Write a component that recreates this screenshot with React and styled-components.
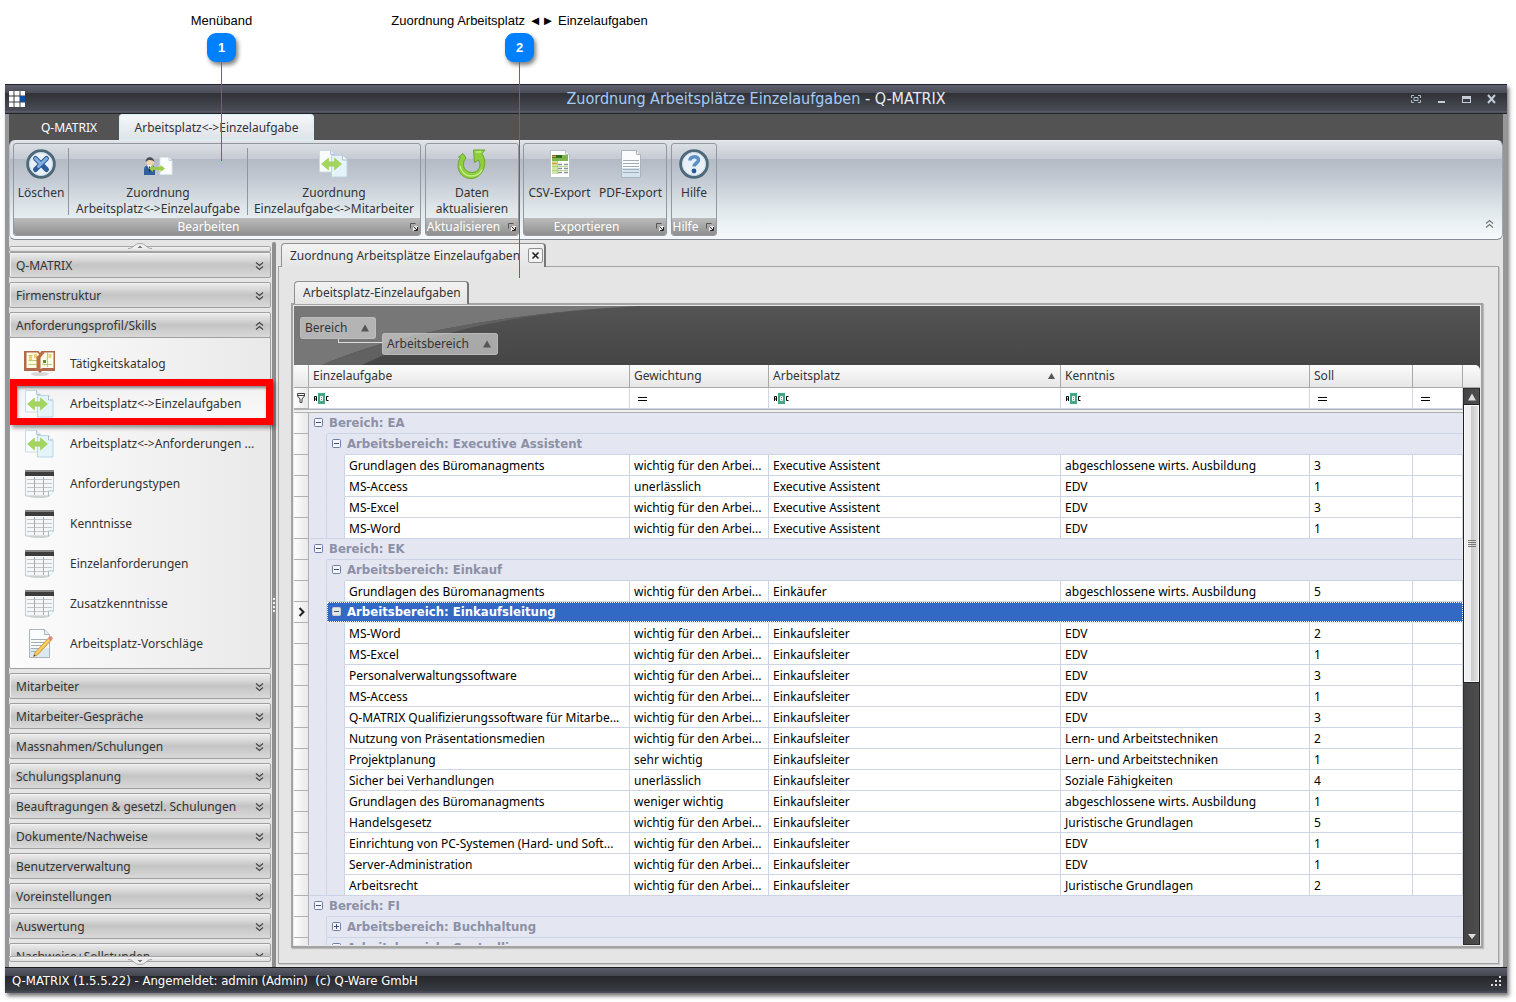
import React from 'react';
import styled, { createGlobalStyle, css } from 'styled-components';

const condensed = '"DejaVu Sans Condensed", "Noto Sans", sans-serif';

const GlobalStyle = createGlobalStyle`
  * { box-sizing: border-box; }
  body {
    margin: 0;
    background: #fff;
    color: #333;
    font-family: "Noto Sans", "DejaVu Sans Condensed", sans-serif;
    font-size: 12px;
    line-height: 16px;
  }
  button, input {
    font: inherit;
    color: inherit;
    border: 0;
    padding: 0;
    background: none;
  }
  a { color: inherit; text-decoration: none; }
`;

const Page = styled.div`
  position: relative;
  display: flex;
  flex-direction: column;
  height: 100vh;
  padding: 84px 9px 9px 5px;
  overflow: hidden;
`;

// Callouts
const Callout = styled.div`
  position: absolute;
  z-index: 5;
  top: 13px;
  left: ${(p) => p.$left}px;
  width: 301px;
  display: flex;
  flex-direction: column;
  align-items: center;
  font-family: "Liberation Sans", sans-serif;
  font-size: 13px;
  color: #000;
  white-space: pre;
  pointer-events: none;
`;

const CalloutBadge = styled.span`
  width: 29px;
  height: 29px;
  margin-top: 4px;
  border-radius: 9px;
  background: #0080ff;
  box-shadow: 2px 3px 4px rgba(0, 0, 0, 0.5);
  color: #fff;
  font-weight: bold;
  line-height: 29px;
  text-align: center;
`;

const CalloutLine = styled.span`
  width: 1px;
  height: ${(p) => p.$length}px;
  background: #0080ff;
`;

// Window
const Window = styled.div`
  flex: 1;
  min-height: 0;
  display: flex;
  flex-direction: column;
  box-shadow: 2px 3px 4px rgba(0, 0, 0, 0.55);
  background: #e5e5e5;
`;

const TitleBar = styled.header`
  display: flex;
  align-items: center;
  height: 30px;
  padding: 0 8px 0 4px;
  border-top: 1px solid #22242b;
  border-bottom: 1px solid #22242b;
  background: linear-gradient(#5d606c 0, #4b4e59 8px, #303136 8px, #4a4d57 26px, #666a77 27px, #3a3c45 28px);
`;

const Title = styled.h1`
  flex: 1;
  margin: 0;
  padding-left: 79px;
  font-family: ${condensed};
  font-size: 16px;
  font-weight: normal;
  text-align: center;
  color: #e6ebf2;
`;

const TitleDocument = styled.span`
  color: #a5ccf7;
`;

const WindowButtons = styled.div`
  display: flex;
  gap: 9px;
`;

const WindowButton = styled.button`
  width: 16px;
  height: 16px;
  svg { display: block; }
`;

const Frame = styled.div`
  flex: 1;
  min-height: 0;
  display: flex;
  flex-direction: column;
  border: solid #96979a;
  border-width: 0 4px;
`;

const RibbonTabs = styled.nav`
  display: flex;
  height: 26px;
  padding-left: 10px;
  background: #535353;
`;

const RibbonTab = styled.button`
  height: 26px;
  padding-top: 2px;
  border-radius: 4px 4px 0 0;
  width: ${(p) => p.$width}px;
  color: #fff;
  ${(p) => p.$active && css`
    color: #333;
    background: linear-gradient(#f7f9fa, #dde2e8);
    box-shadow: inset 0 0 2px 1px #d5f0f5;
  `}
`;

const RibbonBack = styled.div`
  background: linear-gradient(#535353 90px, #e5e5e5 90px);
`;

const Ribbon = styled.div`
  display: flex;
  align-items: flex-start;
  gap: 4px;
  height: 100px;
  padding: 2px 7px 0 3px;
  border: 1px solid #9fa5b0;
  border-color: #e7eaee #9fa5b0 #858a96 #b8bdc6;
  border-radius: 6px;
  background: linear-gradient(#dfe3e8 0, #c5cad3 18px, #b3bac5 18px, #c2c9d2 38px, #dfe7eb 68px, #f6fafc 98px);
`;

const RibbonGroup = styled.section`
  display: flex;
  flex-direction: column;
  width: ${(p) => p.$width}px;
  height: 93px;
  border: 1px solid #93979e;
  border-radius: 3px;
  overflow: hidden;
`;

const RibbonItems = styled.div`
  flex: 1;
  display: flex;
`;

const RibbonButton = styled.button`
  flex: ${(p) => p.$grow || 1} 1 0;
  display: flex;
  flex-direction: column;
  align-items: center;
  padding-top: 4px;
  white-space: pre;
  svg { margin-bottom: 5px; flex: none; }
`;

const RibbonDivider = styled.span`
  width: 1px;
  height: 67px;
  margin-top: 4px;
  background: #91959d;
`;

const RibbonCaption = styled.footer`
  display: flex;
  align-items: center;
  gap: 7px;
  height: 17px;
  padding-right: 2px;
  background: linear-gradient(#bcbcbc, #8f8f8f);
  color: #fff;
  span { flex: 1; text-align: center; }
  svg { display: block; flex: none; }
`;

const RibbonCollapse = styled.button`
  margin: 75px 0 0 auto;
  width: 12px;
  height: 16px;
`;

const Body = styled.div`
  flex: 1;
  min-height: 0;
  display: flex;
`;

// Sidebar
const Sidebar = styled.aside`
  flex: none;
  display: flex;
  flex-direction: column;
  width: 262px;
  padding: 6px 0 5px;
`;

const ScrollBarStrip = styled.button`
  position: relative;
  flex: none;
  height: 6px;
  border: 1px solid #a6a6a6;
  border-radius: 2px;
  background: linear-gradient(#f3f3f3, #dcdcdc);
  svg {
    position: absolute;
    left: 118px;
    ${(p) => (p.$up ? 'bottom: 2px;' : 'top: 2px;')}
  }
`;

const SidebarList = styled.div`
  position: relative;
  z-index: 2;
  flex: 1;
  min-height: 0;
  display: flex;
  flex-direction: column;
  gap: 4px;
  overflow-x: visible;
  overflow-y: clip;
`;

const SidebarHeader = styled.button`
  flex: none;
  display: flex;
  align-items: center;
  justify-content: space-between;
  width: 100%;
  height: 26px;
  padding: 1px 5px 0 6px;
  border: 1px solid #a0a0a0;
  border-radius: 2px;
  background: linear-gradient(#ededed 0, #d6d6d6 7px, #c4c4c4 12px, #d9d9d9 24px);
  box-shadow: inset 1px 1px 0 #f2f2f2;
`;

const SidebarPanel = styled.div`
  flex: none;
  margin-top: -5px;
  padding: 5px 0;
  border: 1px solid #a0a0a0;
  border-radius: 0 0 2px 2px;
  background: linear-gradient(90deg, #fcfcfc, #e9e9e9);
`;

const SidebarItem = styled.a`
  position: relative;
  display: flex;
  align-items: center;
  gap: 14px;
  height: 40px;
  padding: 2px 0 0 14px;
  white-space: nowrap;
  svg { flex: none; }
  ${(p) => p.$active && css`
    background: linear-gradient(#d4d4d4, #f3f3f3 8px, #fafafa);
  `}
`;

const RedMarker = styled.span`
  position: absolute;
  top: -4px;
  left: 0;
  right: -3px;
  height: 46px;
  border: 7px solid #fe0000;
  box-shadow: 2px 3px 4px rgba(0, 0, 0, 0.4), inset 1px 2px 3px rgba(0, 0, 0, 0.4);
`;

const Splitter = styled.div`
  flex: none;
  display: flex;
  flex-direction: column;
  align-items: center;
  justify-content: center;
  gap: 2px;
  width: 4px;
  margin: 2px 0 0 1px;
  background: #8d8d8d;
  border-radius: 2px 2px 0 0;
  i { width: 2px; height: 2px; background: #eee; }
`;

// Content
const Content = styled.main`
  flex: 1;
  min-width: 0;
  display: flex;
  flex-direction: column;
  padding: 3px 4px 3px 2px;
`;

const TabStrip = styled.div`
  position: relative;
  z-index: 1;
  flex: none;
  display: flex;
  height: ${(p) => p.$height}px;
  margin: 0 0 -1px 3px;
`;

const DocTab = styled.div`
  display: flex;
  align-items: center;
  justify-content: space-between;
  gap: 8px;
  padding: 0 1px 0 8px;
  width: ${(p) => p.$width}px;
  border: 1px solid #909090;
  border-bottom: 0;
  border-right: 2px solid #777;
  border-radius: 4px 4px 0 0;
  background: linear-gradient(#f2f2f2, #e5e5e5);
  white-space: nowrap;
`;

const CloseTab = styled.button`
  width: 15px;
  height: 15px;
  border: 1px solid #909090;
  border-radius: 2px;
  background: #f2f2f2;
  svg { display: block; }
`;

const DocPanel = styled.div`
  flex: 1;
  min-height: 0;
  display: flex;
  flex-direction: column;
  padding: 14px 15px 15px 12px;
  border: 1px solid #a3a3a3;
  box-shadow: 1px 1px 0 #c8c8c8;
`;

const GridPanel = styled.div`
  flex: 1;
  min-height: 0;
  display: flex;
  flex-direction: column;
  border: 2px solid #a3a3a3;
  padding: 1px;
  background: #e8e8e8;
  box-shadow: 1px 1px 1px #bbb;
`;

const GroupBar = styled.div`
  position: relative;
  flex: none;
  display: flex;
  align-items: flex-start;
  height: 59px;
  padding: 11px 6px;
  background: linear-gradient(#545454, #454545);
`;

const GroupBarArt = styled.svg`
  position: absolute;
  left: 0;
  top: 0;
`;

const GroupChip = styled.button`
  position: relative;
  display: flex;
  align-items: center;
  justify-content: space-between;
  width: ${(p) => p.$width}px;
  height: 22px;
  margin-top: ${(p) => p.$drop || 0}px;
  padding: 0 6px 0 4px;
  border-radius: 3px;
  border: 1px solid rgba(200, 200, 200, 0.5);
  background: rgba(200, 200, 200, 0.75);
`;

const GroupLink = styled.span`
  position: relative;
  width: 44px;
  height: 4px;
  margin: 22px 0 0 -38px;
  border: solid #ddd;
  border-width: 0 0 1px 1px;
`;

const GridArea = styled.div`
  flex: 1;
  min-height: 0;
  display: flex;
  background: #e4e7f1;
`;

const TableClip = styled.div`
  flex: 1;
  min-width: 0;
  overflow: hidden;
`;

const Table = styled.table`
  width: 100%;
  table-layout: fixed;
  border-collapse: separate;
  border-spacing: 0;
  color: #000;
`;

const HeadCell = styled.th`
  height: 23px;
  padding: 0 5px 0 4px;
  border-right: 1px solid #a9a9a9;
  border-bottom: 1px solid #a9a9a9;
  background: linear-gradient(#fcfcfc, #e6e6e6);
  color: #333;
  font-weight: normal;
  text-align: left;
`;

const HeadLabel = styled.span`
  display: flex;
  align-items: center;
  justify-content: space-between;
`;

const FilterCell = styled.td`
  height: 21px;
  padding: 0 4px;
  border-right: 1px solid #d0d7e8;
  border-bottom: 1px solid #d0d7e8;
  background: #fff;
`;

const FilterBox = styled.label`
  display: flex;
  align-items: center;
  input { flex: 1; min-width: 0; width: 0; height: 16px; outline: 0; }
`;

const Indicator = styled.td`
  height: 21px;
  padding: 0;
  border-right: 1px solid #b0b0b0;
  border-bottom: 1px solid #b0b0b0;
  background: linear-gradient(90deg, #fdfdfd, #e9e9e9);
  text-align: center;
  svg { display: block; margin: 0 auto; }
`;

const GapCell = styled.td`
  height: 4px;
  padding: 0;
  border: solid #b0b0b0;
  border-width: 1px 0;
  background: #f0f0f0;
`;

const Cell = styled.td`
  height: 21px;
  padding: 2px 2px 0 4px;
  border-right: 1px solid #ccd4e6;
  border-bottom: 1px solid #ccd4e6;
  background: #fff;
  white-space: nowrap;
  overflow: hidden;
`;

const Indent = styled.td`
  padding: 0;
  border-right: 1px solid #ccd4e6;
  border-bottom: 1px solid ${(p) => (p.$end ? '#ccd4e6' : '#e4e7f1')};
  background: #e4e7f1;
`;

const GroupCell = styled.td`
  height: 21px;
  padding: 0;
  background: #e4e7f1;
`;

const GroupRow = styled.div`
  display: flex;
  height: 21px;
  color: #8c90a6;
  font-family: ${condensed};
  font-size: 13px;
  font-weight: bold;
  ${(p) => p.$selected && css`
    height: 20px;
    margin-bottom: 1px;
    background: #316ac5;
    color: #fff;
    outline: 1px dotted #fff;
    outline-offset: -1px;
  `}
`;

const Toggle = styled.button`
  width: 18px;
  height: 21px;
  padding: 0 0 2px 5px;
  border-bottom: 1px solid ${(p) => (p.$line ? '#ccd4e6' : 'transparent')};
  svg { display: block; }
`;

const GroupLabel = styled.span`
  flex: 1;
  height: 21px;
  padding: 2px 0 0 2px;
  border-bottom: 1px solid ${(p) => (p.$selected ? 'transparent' : '#ccd4e6')};
`;

const ScrollColumn = styled.div`
  flex: none;
  display: flex;
  flex-direction: column;
  width: 17px;
  background: #454545;
`;

const ScrollCorner = styled.div`
  height: 23px;
  border-bottom: 1px solid #a9a9a9;
  border-radius: 0 5px 0 0;
  background: linear-gradient(#fcfcfc, #e6e6e6);
`;

const ScrollTrack = styled.div`
  flex: 1;
  display: flex;
  flex-direction: column;
  border: 1px solid #303030;
  border-right-color: #222;
  background: linear-gradient(90deg, #444, #4e4e4e);
`;

const ScrollButton = styled.button`
  height: 16px;
  svg { display: block; margin: 0 auto; }
`;

const ScrollRoom = styled.div`
  flex: 1;
  min-height: 0;
`;

const ScrollThumb = styled.div`
  display: flex;
  flex-direction: column;
  align-items: center;
  justify-content: center;
  gap: 1px;
  height: 53%;
  border: 1px solid #fafafa;
  outline: 1px solid #222;
  background: linear-gradient(90deg, #efefef 45%, #c9c9cf 50%, #e2e2e2);
  i { width: 8px; height: 1px; background: #777; }
`;

const StatusBar = styled.footer`
  flex: none;
  display: flex;
  align-items: center;
  justify-content: space-between;
  height: 26px;
  padding: 0 5px 0 7px;
  border-top: 1px solid #1b1c20;
  background: linear-gradient(#5b5e6a 0, #42454e 8px, #26272b 8px, #383a42 22px, #50535f);
  color: #fff;
  font-family: ${condensed};
  font-size: 13px;
  white-space: pre;
`;

// Icons
const Chevrons = ({ up, color = '#444' }) => (
  <svg width="11" height="12" viewBox="0 0 11 12" fill="none" stroke={color} strokeWidth="1.2">
    {up ? <path d="M2 5.500 5.500 2.500 9 5.500M2 9.500l3.500-3 3.500 3" /> : <path d="M2 2.500l3.500 3 3.500-3M2 6.500l3.500 3 3.500-3" />}
  </svg>
);

const Triangle = ({ size = 8, down, color = '#555' }) => (
  <svg width={size} height="8" viewBox="0 0 8 8"><path d={down ? 'M0 2h8L4 7z' : 'M0 7.500h8L4 .500z'} fill={color} /></svg>
);

const LogoIcon = () => (
  <svg width="16" height="16" viewBox="0 0 16 16">
    <path fill="#fff" d="M0 0h4.500v4.500H0zM5.500 0h5v4.500h-5zM11.500 0H16v4.500h-4.500zM0 5.500h4.500v5H0zM5.500 5.500h5v5h-5zM0 11.500h4.500V16H0zM5.500 11.500h5V16h-5zM11.500 11.500H16V16h-4.500z" />
    <path fill="#0b4ea2" d="M11 5h5v5.500h-5z" />
  </svg>
);

const DeleteIcon = () => (
  <svg width="32" height="32" viewBox="0 0 32 32">
    <circle cx="16" cy="16" r="13.300" fill="#e9f0f7" stroke="#4d6878" strokeWidth="3" />
    <circle cx="16" cy="16" r="11.500" fill="none" stroke="#c8d8e6" />
    <path d="m10.500 10.500 11 11M21.500 10.500l-11 11" stroke="#2c5d9b" strokeWidth="5" strokeLinecap="round" />
    <path d="m10.500 10.500 4.500 4.500M21.500 10.500l-8 8" stroke="#84b0e0" strokeWidth="3" strokeLinecap="round" />
  </svg>
);

const HelpIcon = () => (
  <svg width="32" height="32" viewBox="0 0 32 32">
    <circle cx="16" cy="16" r="13.300" fill="#e9f0f7" stroke="#4d6878" strokeWidth="3" />
    <circle cx="16" cy="16" r="11.500" fill="none" stroke="#c8d8e6" />
    <path d="M12 12.500c0-5 8.500-5 8.500-.500 0 3-4.500 3.500-4.500 6.500" fill="none" stroke="#5a8fc8" strokeWidth="3.600" />
    <circle cx="16" cy="23" r="2.400" fill="#245a9c" />
  </svg>
);

const PersonDocIcon = () => (
  <svg width="32" height="32" viewBox="0 0 32 32">
    <path d="M18 9.500h9l3 3v14H18z" fill="#fafcfd" stroke="#dbe5ec" />
    <path d="M27 9.500v3h3" fill="none" stroke="#c4d2dc" />
    <path d="M2 27v-5.500c0-3 2-4.500 5-4.500s6 1 6 4.500V27z" fill="#2f5f9e" />
    <path d="m5 17 2.500 5 2.500-5z" fill="#fff" />
    <path d="M7.500 18.500v5" stroke="#222" strokeWidth="1.200" />
    <circle cx="8" cy="13.500" r="3.900" fill="#f0d3b4" />
    <path d="M3.800 14c-1-6.500 9-6.500 8.400 0-1-2.500-6.500-3-8.400 0" fill="#4a4f55" />
    <path d="m7 20.500 4-3.500v2h7.500v-2l4.500 3.500-4.500 3.500v-2H11v2z" fill="#9acb4a" />
  </svg>
);

const SwapDocsIcon = () => (
  <svg width="32" height="32" viewBox="1 1 32 32">
    <path d="M2.500 3.500h11l4 4V25h-15z" fill="#f8fcfe" stroke="#cbdbe4" />
    <path d="M13.500 3.500v4h4" fill="#e3eef5" stroke="#b5c6d0" />
    <path d="M14.500 8.500h11l4.500 4.500v17H14.500z" fill="#e4f4fa" stroke="#bcd5e2" />
    <path d="M25.500 8.500V13H30" fill="#fff" stroke="#a9bbc7" />
    <path d="m4.500 17 7-6v3.800h6V11l7 6-7 6v-3.800h-6V23z" fill="#a4d55f" stroke="#98c953" strokeWidth=".6" />
  </svg>
);

const RefreshIcon = () => (
  <svg width="32" height="32" viewBox="0 0 32 32">
    <path d="M2.500 9 7 5.500l3 4.500c-5 5-2.500 14.500 6 14.500 7 0 10-7 6.500-12.500l-4 2.500L17.500 2H29l-3 3.500c7 11-.5 25.500-11.500 25C3 30-1 18 4.500 9.500z" fill="#8fce3f" stroke="#6ba72c" />
    <path d="M4 18c1 6 5.500 10 11 10s9.500-3 11-6.500M19.500 4h6" fill="none" stroke="#c4ec8b" strokeWidth="1.500" />
  </svg>
);

const CsvIcon = () => (
  <svg width="32" height="32" viewBox="0 0 32 32">
    <path d="M6.500 2.500h15l4 4v23h-19z" fill="#fff" stroke="#b9c2ca" />
    <path d="M21.500 2.500v4h4" fill="#eee" stroke="#b9c2ca" />
    <path d="M8 7h16v6H8z" fill="#7fb44f" />
    <path d="M8 7h10v3H8z" fill="#2f6b1c" />
    <path d="M8 13h5v13H8z" fill="#cfe6a8" />
    <path d="M8 8.500h4M8 15.500h5" stroke="#e0a03a" strokeWidth="1.500" />
    <path d="M14 16.500h4M20 16.500h4M14 20.500h4M20 20.500h4M14 24.500h4M20 24.500h4" stroke="#8a9199" strokeWidth="1.500" />
    <path d="M8 18.500h16M8 22.500h16M13.500 13v13" stroke="#a7cd79" strokeWidth=".8" />
  </svg>
);

const PdfIcon = () => (
  <svg width="32" height="32" viewBox="0 0 32 32">
    <path d="M6.500 2.500h15l4 4v23h-19z" fill="#fafcfd" stroke="#aab4bd" />
    <path d="M7 20h18v9H7z" fill="#d3e4ee" />
    <path d="M21.500 2.500v4h4" fill="#eee" stroke="#aab4bd" />
    <path d="M8 12.500h16M8 15.500h16M8 18.500h16M8 21.500h16M8 24.500h16" stroke="#a3adb6" />
  </svg>
);

const EditDocIcon = () => (
  <svg width="32" height="32" viewBox="0 0 32 32">
    <path d="M5.500 1.500h15l5 5v23h-20z" fill="#fbfcfd" stroke="#aab4bd" />
    <path d="M6 20h19v9H6z" fill="#dce9f1" />
    <path d="M20.500 1.500v5h5" fill="#eee" stroke="#aab4bd" />
    <path d="M7 11.500h16M7 14.500h16M7 17.500h13M7 20.500h10M7 23.500h8" stroke="#a3b0ba" />
    <path d="m9.500 28.500 1.500-4L25 9.500l2.500 2.500L13.500 27z" fill="#f5c04c" stroke="#c98b2c" strokeWidth=".7" />
    <path d="M12 25.500 26 11" stroke="#fbe08c" />
    <path d="m24 10.500 2-2c1-1 3.500 1.500 2.500 2.500l-2 2z" fill="#e0857e" />
    <path d="m9.500 28.500.8-2 1.200 1.200z" fill="#333" />
  </svg>
);

const TableIcon = () => (
  <svg width="32" height="32" viewBox="0 0 32 32">
    <ellipse cx="15" cy="28" rx="11" ry="2" fill="#d2d2d2" />
    <path d="M1.500 2.500h28V23l-5 5h-23z" fill="#f4f6f7" stroke="#c2cbd1" />
    <path d="M1 2h29v6H1z" fill="#3c3c3c" />
    <path d="M1 2h29v2H1z" fill="#858585" />
    <path d="M3 11.500h25M3 15.500h25M3 19.500h25M3 23.500h22" stroke="#c3c7ca" />
    <path d="M10.500 9v18M19.500 9v18" stroke="#aaaeb1" />
    <path d="M24.500 28v-5h5" fill="#fff" stroke="#a9bcc8" />
  </svg>
);

const BookIcon = () => (
  <svg width="32" height="32" viewBox="0 0 32 32">
    <ellipse cx="16" cy="26" rx="9" ry="2" fill="#d8d8d8" />
    <path d="M0 3h14.500L16 5l1.500-2H31v20H18l-2 2-2-2H0z" fill="#b0674a" />
    <path d="M2.500 4.500h11L15 6v15l-1.500-1h-11z" fill="#fff9df" />
    <path d="M29.500 4.500h-11L16.500 6v15l2-1h11z" fill="#fffbe9" />
    <path d="M4.500 7.500h4M4.500 12.500h9M18 16.500h10M23.500 5v14M4.500 16.500h8" stroke="#b4cf79" />
    <path d="M5 8h3v4H5zM10 6h3v4h-3zM24.500 6h3v4h-3z" fill="#ecd178" />
    <path d="M19 12h3v3h-3z" fill="#5d8f35" />
    <path d="M12.500 23V9l7-6 1 2-4.500 5v12z" fill="#bd6b48" />
  </svg>
);

const FilterTextIcon = () => (
  <svg width="16" height="12" viewBox="0 0 16 12" fill="none">
    <path d="M5 1h7v11H5z" fill="#43a883" />
    <path d="M1.500 9V4.500h2V9M1.500 7h2M15.500 4.500h-2v4h2" stroke="#000" />
    <path d="M7.500 4.500h2v4h-2zM7.500 6.500h2" stroke="#fff" />
  </svg>
);

const EqualsIcon = () => (
  <svg width="16" height="12" viewBox="0 0 16 12"><path d="M4 5.500h9M4 8.500h9" stroke="#000" /></svg>
);

const FunnelIcon = () => (
  <svg width="10" height="10" viewBox="0 0 10 10" fill="none" stroke="#444">
    <path d="M1.500.500h7v2.500L6 6v3.500H4V6L1.500 3zM1.500 2.500h7" />
  </svg>
);

const PlusMinus = ({ plus, selected }) => (
  <svg width="9" height="9" viewBox="0 0 9 9">
    <rect x=".5" y=".5" width="8" height="8" rx="1" fill={selected ? '#e6e6e0' : '#f4f6fb'} stroke={selected ? '#c9cdd6' : '#6c7ea2'} />
    <path d={plus ? 'M2 4.500h5M4.500 2v5' : 'M2 4.500h5'} stroke="#3c4f78" />
  </svg>
);

const LauncherIcon = () => (
  <svg width="8" height="8" viewBox="0 0 8 8" fill="none">
    <path d="M.5 5.500v-5h5" stroke="#555" />
    <path d="M3 3h5v5H3z" fill="#e8e8e8" />
    <path d="M3.500 3.500 7 7M7.500 4v3.500H4" stroke="#222" />
  </svg>
);

const StripNub = ({ up }) => (
  <svg width="24" height="6" viewBox="0 0 24 6">
    <path d={up ? 'M0 5.500C6 5.500 6 .5 12 .5s6 5 12 5' : 'M0 .5c6 0 6 5 12 5s6-5 12-5'} fill="#f0f0f0" stroke="#a6a6a6" />
    <path d={up ? 'M9.500 5h5L12 2.500z' : 'M9.500 1h5L12 3.500z'} fill="#777" />
  </svg>
);

// Data
const sectionsTop = ['Q-MATRIX', 'Firmenstruktur'];

const skills = [
  { label: 'Tätigkeitskatalog', Icon: BookIcon },
  { label: 'Arbeitsplatz<->Einzelaufgaben', Icon: SwapDocsIcon, active: true },
  { label: 'Arbeitsplatz<->Anforderungen ...', Icon: SwapDocsIcon },
  { label: 'Anforderungstypen', Icon: TableIcon },
  { label: 'Kenntnisse', Icon: TableIcon },
  { label: 'Einzelanforderungen', Icon: TableIcon },
  { label: 'Zusatzkenntnisse', Icon: TableIcon },
  { label: 'Arbeitsplatz-Vorschläge', Icon: EditDocIcon },
];

const sectionsBottom = [
  'Mitarbeiter',
  'Mitarbeiter-Gespräche',
  'Massnahmen/Schulungen',
  'Schulungsplanung',
  'Beauftragungen & gesetzl. Schulungen',
  'Dokumente/Nachweise',
  'Benutzerverwaltung',
  'Voreinstellungen',
  'Auswertung',
  'Nachweise+Sollstunden',
];

const W = 'wichtig für den Arbei...';
const EA = 'Executive Assistent';
const EL = 'Einkaufsleiter';

const rows = [
  { area: 'Bereich: EA' },
  { group: 'Arbeitsbereich: Executive Assistent' },
  { cells: ['Grundlagen des Büromanagments', W, EA, 'abgeschlossene wirts. Ausbildung', 3] },
  { cells: ['MS-Access', 'unerlässlich', EA, 'EDV', 1] },
  { cells: ['MS-Excel', W, EA, 'EDV', 3] },
  { cells: ['MS-Word', W, EA, 'EDV', 1] },
  { area: 'Bereich: EK' },
  { group: 'Arbeitsbereich: Einkauf' },
  { cells: ['Grundlagen des Büromanagments', W, 'Einkäufer', 'abgeschlossene wirts. Ausbildung', 5] },
  { group: 'Arbeitsbereich: Einkaufsleitung', selected: true },
  { cells: ['MS-Word', W, EL, 'EDV', 2] },
  { cells: ['MS-Excel', W, EL, 'EDV', 1] },
  { cells: ['Personalverwaltungssoftware', W, EL, 'EDV', 3] },
  { cells: ['MS-Access', W, EL, 'EDV', 1] },
  { cells: ['Q-MATRIX Qualifizierungssoftware für Mitarbe...', W, EL, 'EDV', 3] },
  { cells: ['Nutzung von Präsentationsmedien', W, EL, 'Lern- und Arbeitstechniken', 2] },
  { cells: ['Projektplanung', 'sehr wichtig', EL, 'Lern- und Arbeitstechniken', 1] },
  { cells: ['Sicher bei Verhandlungen', 'unerlässlich', EL, 'Soziale Fähigkeiten', 4] },
  { cells: ['Grundlagen des Büromanagments', 'weniger wichtig', EL, 'abgeschlossene wirts. Ausbildung', 1] },
  { cells: ['Handelsgesetz', W, EL, 'Juristische Grundlagen', 5] },
  { cells: ['Einrichtung von PC-Systemen (Hard- und Soft...', W, EL, 'EDV', 1] },
  { cells: ['Server-Administration', W, EL, 'EDV', 1] },
  { cells: ['Arbeitsrecht', W, EL, 'Juristische Grundlagen', 2] },
  { area: 'Bereich: FI' },
  { group: 'Arbeitsbereich: Buchhaltung', collapsed: true },
  { group: 'Arbeitsbereich: Controlling', collapsed: true },
];

const columns = ['Gewichtung', 'Arbeitsplatz', 'Kenntnis', 'Soll', ''];

function GridRow({ row, next = {} }) {
  if (row.area) {
    return (
      <tr>
        <Indicator />
        <GroupCell colSpan={8}>
          <GroupRow>
            <Toggle aria-label="Gruppe umschalten"><PlusMinus /></Toggle>
            <GroupLabel>{row.area}</GroupLabel>
          </GroupRow>
        </GroupCell>
      </tr>
    );
  }
  if (row.group) {
    return (
      <tr>
        <Indicator>
          {row.selected && (
            <svg width="8" height="10" viewBox="0 0 8 10"><path d="m2.500 1 4 4-4 4" fill="none" stroke="#222" strokeWidth="2" /></svg>
          )}
        </Indicator>
        <Indent />
        <GroupCell colSpan={7}>
          <GroupRow $selected={row.selected}>
            <Toggle $line={row.collapsed} aria-label="Gruppe umschalten">
              <PlusMinus plus={row.collapsed} selected={row.selected} />
            </Toggle>
            <GroupLabel $selected={row.selected}>{row.group}</GroupLabel>
          </GroupRow>
        </GroupCell>
      </tr>
    );
  }
  return (
    <tr>
      <Indicator />
      <Indent $end={!!next.area} />
      <Indent $end={!next.cells} />
      {row.cells.map((text, i) => <Cell key={i}>{text}</Cell>)}
      <Cell />
    </tr>
  );
}

function Filter({ name, equals }) {
  return (
    <FilterBox>
      {equals ? <EqualsIcon /> : <FilterTextIcon />}
      <input type="text" aria-label={`Filter ${name}`} />
    </FilterBox>
  );
}

function Grid() {
  return (
    <GridArea>
      <TableClip>
        <Table>
          <colgroup>
            <col style={{ width: 15 }} />
            <col style={{ width: 18 }} />
            <col style={{ width: 18 }} />
            <col style={{ width: 285 }} />
            <col style={{ width: 139 }} />
            <col style={{ width: 292 }} />
            <col style={{ width: 249 }} />
            <col style={{ width: 103 }} />
            <col />
          </colgroup>
          <thead>
            <tr>
              <HeadCell />
              <HeadCell colSpan={3}>Einzelaufgabe</HeadCell>
              {columns.map((name) => (
                <HeadCell key={name}>
                  <HeadLabel>{name}{name === 'Arbeitsplatz' && <Triangle size={7} />}</HeadLabel>
                </HeadCell>
              ))}
            </tr>
          </thead>
          <tbody>
            <tr>
              <Indicator><FunnelIcon /></Indicator>
              <FilterCell colSpan={3}><Filter name="Einzelaufgabe" /></FilterCell>
              {columns.map((name) => (
                <FilterCell key={name}>
                  <Filter name={name} equals={name !== 'Arbeitsplatz' && name !== 'Kenntnis'} />
                </FilterCell>
              ))}
            </tr>
            <tr><GapCell colSpan={9} /></tr>
            {rows.map((row, i) => <GridRow key={i} row={row} next={rows[i + 1]} />)}
          </tbody>
        </Table>
      </TableClip>
      <ScrollColumn>
        <ScrollCorner />
        <ScrollTrack>
          <ScrollButton aria-label="Nach oben"><Triangle color="#ddd" /></ScrollButton>
          <ScrollRoom>
            <ScrollThumb><i /><i /><i /><i /></ScrollThumb>
          </ScrollRoom>
          <ScrollButton aria-label="Nach unten"><Triangle down color="#ddd" /></ScrollButton>
        </ScrollTrack>
      </ScrollColumn>
    </GridArea>
  );
}

function Caption({ children }) {
  return <RibbonCaption><span>{children}</span><LauncherIcon /></RibbonCaption>;
}

function Menu() {
  return (
    <RibbonBack>
      <Ribbon>
        <RibbonGroup $width={408}>
          <RibbonItems>
            <RibbonButton $grow={54}><DeleteIcon />Löschen</RibbonButton>
            <RibbonDivider />
            <RibbonButton $grow={178}><PersonDocIcon />{'Zuordnung\nArbeitsplatz<->Einzelaufgabe'}</RibbonButton>
            <RibbonDivider />
            <RibbonButton $grow={172}><SwapDocsIcon />{'Zuordnung\nEinzelaufgabe<->Mitarbeiter'}</RibbonButton>
          </RibbonItems>
          <Caption>Bearbeiten</Caption>
        </RibbonGroup>
        <RibbonGroup $width={94}>
          <RibbonItems>
            <RibbonButton><RefreshIcon />{'Daten\naktualisieren'}</RibbonButton>
          </RibbonItems>
          <Caption>Aktualisieren</Caption>
        </RibbonGroup>
        <RibbonGroup $width={144}>
          <RibbonItems>
            <RibbonButton><CsvIcon />CSV-Export</RibbonButton>
            <RibbonButton><PdfIcon />PDF-Export</RibbonButton>
          </RibbonItems>
          <Caption>Exportieren</Caption>
        </RibbonGroup>
        <RibbonGroup $width={46}>
          <RibbonItems>
            <RibbonButton><HelpIcon />Hilfe</RibbonButton>
          </RibbonItems>
          <Caption>Hilfe</Caption>
        </RibbonGroup>
        <RibbonCollapse aria-label="Menüband minimieren"><Chevrons up color="#777" /></RibbonCollapse>
      </Ribbon>
    </RibbonBack>
  );
}

function Navigation() {
  return (
    <Sidebar>
      <ScrollBarStrip $up aria-label="Nach oben"><StripNub up /></ScrollBarStrip>
      <SidebarList>
        {sectionsTop.map((name) => <SidebarHeader key={name}>{name}<Chevrons /></SidebarHeader>)}
        <SidebarHeader>Anforderungsprofil/Skills<Chevrons up /></SidebarHeader>
        <SidebarPanel>
          {skills.map(({ label, Icon, active }) => (
            <SidebarItem key={label} href="#" $active={active}>
              <Icon />{label}
              {active && <RedMarker />}
            </SidebarItem>
          ))}
        </SidebarPanel>
        {sectionsBottom.map((name) => <SidebarHeader key={name}>{name}<Chevrons /></SidebarHeader>)}
      </SidebarList>
      <ScrollBarStrip aria-label="Nach unten"><StripNub /></ScrollBarStrip>
    </Sidebar>
  );
}

export default function App() {
  return (
    <Page>
      <GlobalStyle />
      <Callout $left={71}>
        <span>Menüband</span>
        <CalloutBadge>1</CalloutBadge>
        <CalloutLine $length={99} />
      </Callout>
      <Callout $left={369}>
        <span>Zuordnung Arbeitsplatz ◄► Einzelaufgaben</span>
        <CalloutBadge>2</CalloutBadge>
        <CalloutLine $length={216} />
      </Callout>
      <Window>
        <TitleBar>
          <LogoIcon />
          <Title><TitleDocument>Zuordnung Arbeitsplätze Einzelaufgaben</TitleDocument> - Q-MATRIX</Title>
          <WindowButtons>
            <WindowButton aria-label="Vollbild">
              <svg width="16" height="16" viewBox="0 0 16 16" fill="none" stroke="#b3bcc8"><path d="M3.500 7V4.500H6M10 4.500h2.500V7M12.500 9v2.500H10M6 11.500H3.500V9M6 6.500h4v3H6z" /></svg>
            </WindowButton>
            <WindowButton aria-label="Minimieren">
              <svg width="16" height="16" viewBox="0 0 16 16"><path d="M5 10h7v2H5z" fill="#c3ccd8" /></svg>
            </WindowButton>
            <WindowButton aria-label="Maximieren">
              <svg width="16" height="16" viewBox="0 0 16 16"><path d="M4 5h9v7H4zm1 3v3h7V8z" fill="#c3ccd8" fillRule="evenodd" /></svg>
            </WindowButton>
            <WindowButton aria-label="Schließen">
              <svg width="16" height="16" viewBox="0 0 16 16"><path d="m5 4 7 8M12 4l-7 8" stroke="#c3ccd8" strokeWidth="2" /></svg>
            </WindowButton>
          </WindowButtons>
        </TitleBar>
        <Frame>
          <RibbonTabs>
            <RibbonTab $width={100}>Q-MATRIX</RibbonTab>
            <RibbonTab $width={195} $active>{'Arbeitsplatz<->Einzelaufgabe'}</RibbonTab>
          </RibbonTabs>
          <Menu />
          <Body>
            <Navigation />
            <Splitter><i /><i /><i /><i /></Splitter>
            <Content>
              <TabStrip $height={24}>
                <DocTab $width={265}>
                  Zuordnung Arbeitsplätze Einzelaufgaben
                  <CloseTab aria-label="Tab schließen">
                    <svg width="13" height="13" viewBox="0 0 13 13"><path d="m3.500 3.500 6 6M9.500 3.500l-6 6" stroke="#222" strokeWidth="1.600" /></svg>
                  </CloseTab>
                </DocTab>
              </TabStrip>
              <DocPanel>
                <TabStrip $height={23}>
                  <DocTab $width={175}>Arbeitsplatz-Einzelaufgaben</DocTab>
                </TabStrip>
                <GridPanel>
                  <GroupBar>
                    <GroupBarArt width="400" height="59" viewBox="0 0 400 59">
                      <path d="M0 0h345C230 6 110 24 28 59H0z" fill="#777" />
                      <path d="M345 0C230 6 110 24 28 59h40C140 24 230 6 345 0z" fill="#616161" />
                    </GroupBarArt>
                    <GroupChip $width={76}>Bereich<Triangle /></GroupChip>
                    <GroupLink />
                    <GroupChip $width={116} $drop={16}>Arbeitsbereich<Triangle /></GroupChip>
                  </GroupBar>
                  <Grid />
                </GridPanel>
              </DocPanel>
            </Content>
          </Body>
        </Frame>
        <StatusBar>
          <span>Q-MATRIX (1.5.5.22) - Angemeldet: admin (Admin)  (c) Q-Ware GmbH</span>
          <svg width="12" height="12" viewBox="0 0 12 12"><path d="M9 1h2v2H9zM5 5h2v2H5zM9 5h2v2H9zM1 9h2v2H1zM5 9h2v2H5zM9 9h2v2H9z" fill="#ddd" /></svg>
        </StatusBar>
      </Window>
    </Page>
  );
}
